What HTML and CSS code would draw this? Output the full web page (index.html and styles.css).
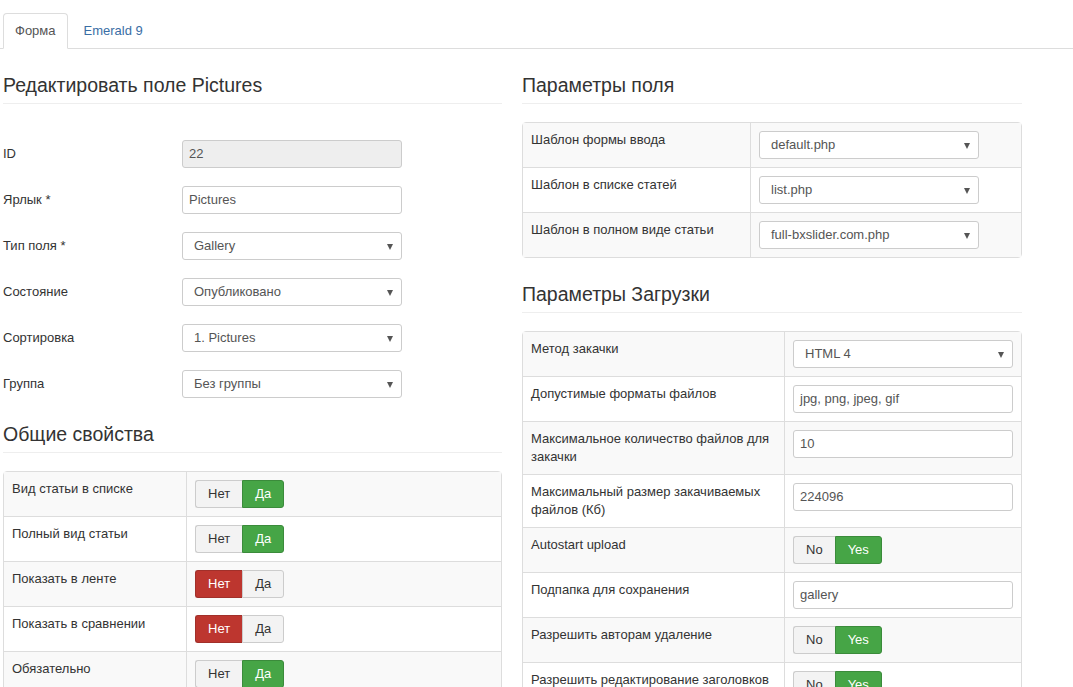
FILE: index.html
```html
<!DOCTYPE html>
<html lang="ru">
<head>
<meta charset="utf-8">
<title>Редактировать поле Pictures</title>
<link rel="stylesheet" href="styles.css">
</head>
<body>
<ul class="tabs">
  <li class="tab active">Форма</li>
  <li class="tab link">Emerald 9</li>
</ul>
<div class="content">
  <div class="col col-left">
    <section class="section">
      <h3 class="heading">Редактировать поле Pictures</h3>
      <div class="form">
        <div class="row"><label class="lbl">ID</label><div class="input disabled">22</div></div>
        <div class="row"><label class="lbl">Ярлык *</label><div class="input">Pictures</div></div>
        <div class="row"><label class="lbl">Тип поля *</label><div class="input select">Gallery<span class="caret"></span></div></div>
        <div class="row"><label class="lbl">Состояние</label><div class="input select">Опубликовано<span class="caret"></span></div></div>
        <div class="row"><label class="lbl">Сортировка</label><div class="input select">1. Pictures<span class="caret"></span></div></div>
        <div class="row"><label class="lbl">Группа</label><div class="input select">Без группы<span class="caret"></span></div></div>
      </div>
    </section>
    <section class="section">
      <h3 class="heading">Общие свойства</h3>
      <table class="tbl tbl-left">
        <tr><td class="c1">Вид статьи в списке</td><td class="c2"><div class="toggle"><span class="btn">Нет</span><span class="btn on-green">Да</span></div></td></tr>
        <tr><td class="c1">Полный вид статьи</td><td class="c2"><div class="toggle"><span class="btn">Нет</span><span class="btn on-green">Да</span></div></td></tr>
        <tr><td class="c1">Показать в ленте</td><td class="c2"><div class="toggle"><span class="btn on-red">Нет</span><span class="btn">Да</span></div></td></tr>
        <tr><td class="c1">Показать в сравнении</td><td class="c2"><div class="toggle"><span class="btn on-red">Нет</span><span class="btn">Да</span></div></td></tr>
        <tr><td class="c1">Обязательно</td><td class="c2"><div class="toggle"><span class="btn">Нет</span><span class="btn on-green">Да</span></div></td></tr>
      </table>
    </section>
  </div>
  <div class="col col-right">
    <section class="section">
      <h3 class="heading">Параметры поля</h3>
      <table class="tbl tbl-r1">
        <tr><td class="c1">Шаблон формы ввода</td><td class="c2"><div class="input select">default.php<span class="caret"></span></div></td></tr>
        <tr><td class="c1">Шаблон в списке статей</td><td class="c2"><div class="input select">list.php<span class="caret"></span></div></td></tr>
        <tr><td class="c1">Шаблон в полном виде статьи</td><td class="c2"><div class="input select">full-bxslider.com.php<span class="caret"></span></div></td></tr>
      </table>
    </section>
    <section class="section">
      <h3 class="heading">Параметры Загрузки</h3>
      <table class="tbl tbl-r2">
        <tr><td class="c1">Метод закачки</td><td class="c2"><div class="input select">HTML 4<span class="caret"></span></div></td></tr>
        <tr><td class="c1">Допустимые форматы файлов</td><td class="c2"><div class="input">jpg, png, jpeg, gif</div></td></tr>
        <tr><td class="c1">Максимальное количество файлов для закачки</td><td class="c2"><div class="input">10</div></td></tr>
        <tr><td class="c1">Максимальный размер закачиваемых файлов (Кб)</td><td class="c2"><div class="input">224096</div></td></tr>
        <tr><td class="c1">Autostart upload</td><td class="c2"><div class="toggle"><span class="btn">No</span><span class="btn on-green">Yes</span></div></td></tr>
        <tr><td class="c1">Подпапка для сохранения</td><td class="c2"><div class="input">gallery</div></td></tr>
        <tr><td class="c1">Разрешить авторам удаление</td><td class="c2"><div class="toggle"><span class="btn">No</span><span class="btn on-green">Yes</span></div></td></tr>
        <tr><td class="c1">Разрешить редактирование заголовков</td><td class="c2"><div class="toggle"><span class="btn">No</span><span class="btn on-green">Yes</span></div></td></tr>
      </table>
    </section>
  </div>
</div>
</body>
</html>
```
FILE: styles.css
```css
* { box-sizing: border-box; }
html, body { margin: 0; padding: 0; background: #fff; }
body {
  font-family: "Liberation Sans", Arial, sans-serif;
  font-size: 13px;
  line-height: 18px;
  color: #333;
  overflow: hidden;
}
.tabs {
  list-style: none;
  margin: 13px 0 0;
  padding: 0 0 0 3px;
  display: flex;
  border-bottom: 1px solid #ddd;
}
.tab {
  padding: 8px 11px;
  margin-right: 4px;
  margin-bottom: -1px;
  border: 1px solid transparent;
  border-radius: 4px 4px 0 0;
  line-height: 18px;
}
.tab.active {
  color: #555;
  background: #fff;
  border-color: #ddd #ddd transparent;
}
.tab.link { color: #3a6ea5; }
.content {
  display: flex;
  gap: 20px;
  padding: 0 3px;
}
.col-left { width: 499px; }
.col-right { width: 500px; }
.section { margin-top: 24px; }
.heading {
  margin: 0 0 18px;
  font-size: 19.5px;
  font-weight: normal;
  line-height: 24px;
  padding-bottom: 6px;
  border-bottom: 1px solid #eee;
  color: #333;
}
.form { padding-top: 18px; }
.row { display: flex; align-items: center; margin-bottom: 18px; }
.row:last-child { margin-bottom: 0; }
.lbl { width: 179px; }
.input {
  position: relative;
  width: 220px;
  height: 28px;
  padding: 4px 6px;
  border: 1px solid #ccc;
  border-radius: 3px;
  color: #555;
  background: #fff;
  line-height: 18px;
  white-space: nowrap;
}
.input.disabled { background: #eee; }
.input.select { padding-left: 11px; }
.caret {
  position: absolute;
  right: 8px;
  top: 11px;
  width: 0;
  height: 0;
  border-left: 3.5px solid transparent;
  border-right: 3.5px solid transparent;
  border-top: 6px solid #555;
}
.tbl {
  width: 100%;
  border: 1px solid #ddd;
  border-radius: 4px;
  border-collapse: separate;
  border-spacing: 0;
}
.tbl td {
  padding: 8px;
  vertical-align: top;
  border-top: 1px solid #ddd;
  line-height: 18px;
}
.tbl tr:first-child td { border-top: 0; }
.tbl td.c2 { border-left: 1px solid #ddd; }
.tbl tr:nth-child(odd) td { background: #f9f9f9; }
.tbl-left .c1 { width: 182px; }
.tbl-r1 .c1 { width: 227px; }
.tbl-r2 .c1 { width: 262px; }
.toggle { display: inline-flex; }
.btn {
  display: inline-block;
  padding: 4px 12px;
  line-height: 18px;
  border: 1px solid #ccc;
  background: #f3f3f3;
  color: #333;
}
.btn:first-child { border-radius: 3px 0 0 3px; border-right: 0; }
.btn:last-child { border-radius: 0 3px 3px 0; }
.btn.on-green { background: #46a546; border-color: #3b8b3b; color: #fff; }
.btn.on-red { background: #bd362f; border-color: #a1302a; color: #fff; }
```
